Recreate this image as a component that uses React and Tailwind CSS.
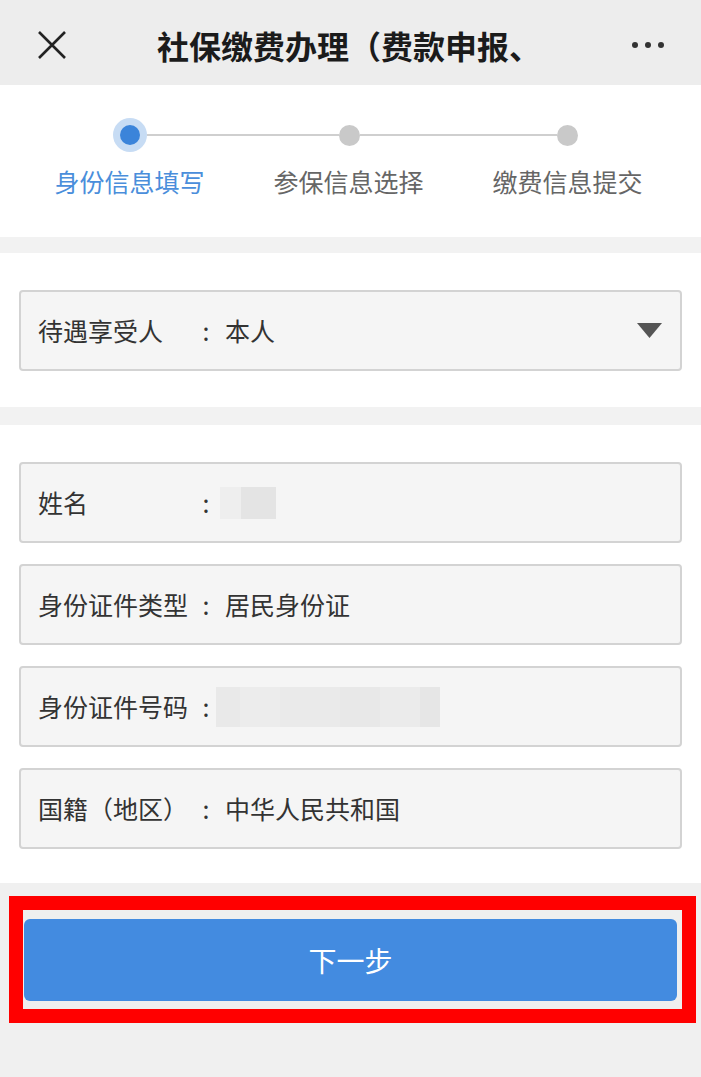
import React from "react";

const fields = [
  { label: "姓名", value: "name" },
  { label: "身份证件类型", value: "居民身份证" },
  { label: "身份证件号码", value: "id" },
  { label: "国籍（地区）", value: "中华人民共和国" },
];

const steps = ["身份信息填写", "参保信息选择", "缴费信息提交"];

const Masked = ({ kind }) => {
  if (kind === "name") {
    return (
      <div className="flex h-[32px] ml-[-5px]">
        <div className="w-[21px] bg-[#eeeeee]" />
        <div className="w-[35px] bg-[#e4e4e4]" />
      </div>
    );
  }
  return (
    <div className="flex h-[40px] ml-[-9px]">
      <div className="w-[24px] bg-[#e9e9e9]" />
      <div className="w-[40px] bg-[#ececec]" />
      <div className="w-[60px] bg-[#eaeaea]" />
      <div className="w-[40px] bg-[#e8e8e8]" />
      <div className="w-[40px] bg-[#ebebeb]" />
      <div className="w-[20px] bg-[#e6e6e6]" />
    </div>
  );
};

const Row = ({ label, children, right }) => (
  <div className="flex items-center h-[81px] border-2 border-[#d3d3d3] rounded-[4px] bg-[#f5f5f5] pl-[17px] pr-[18px] text-[25px] text-[#333]">
    <span className="w-[162px] whitespace-nowrap">{label}</span>
    <span className="w-[12px] text-center">:</span>
    <div className="ml-[13px] flex-1 flex items-center">{children}</div>
    {right}
  </div>
);

export default function App() {
  return (
    <div className="min-h-screen flex flex-col bg-[#f0f0f0] font-['Noto_Sans_CJK_SC','Noto_Sans',sans-serif]">
      {/* HEADER */}
      <div className="h-[85px] bg-[#ededed] flex items-center">
        <div className="w-[157px] pl-[37px] pt-[4px]">
          <svg width="30" height="30" viewBox="0 0 30 30">
            <path d="M2 2 L28 28 M28 2 L2 28" stroke="#222" strokeWidth="2.6" />
          </svg>
        </div>
        <div className="w-[405px] whitespace-nowrap pt-[4px]">
          <span className="text-[32px] font-bold text-[#1b1b1b]">
            社保缴费办理（费款申报、
          </span>
        </div>
        <div className="flex-1 flex justify-end pr-[37px] gap-[7px] pt-[4px]">
          <span className="w-[6px] h-[6px] rounded-full bg-[#333]" />
          <span className="w-[6px] h-[6px] rounded-full bg-[#333]" />
          <span className="w-[6px] h-[6px] rounded-full bg-[#333]" />
        </div>
      </div>

      {/* STEPPER */}
      <div className="h-[152px] bg-white pt-[33px]">
        <div className="flex items-center pl-[113px]">
          <div className="w-[34px] h-[34px] rounded-full bg-[#c7dcf4] flex items-center justify-center">
            <div className="w-[20px] h-[20px] rounded-full bg-[#3b84da]" />
          </div>
          <div className="w-[192px] h-[2px] bg-[#cfcfcf]" />
          <div className="w-[21px] h-[21px] rounded-full bg-[#c9c9c9]" />
          <div className="w-[197px] h-[2px] bg-[#cfcfcf]" />
          <div className="w-[21px] h-[21px] rounded-full bg-[#c9c9c9]" />
        </div>
        <div className="grid grid-cols-3 pl-[20px] pr-[24px] mt-[13px] text-[25px] leading-[32px]">
          {steps.map((s, i) => (
            <div
              key={s}
              className={`text-center ${i === 0 ? "text-[#4a8edb]" : "text-[#666]"}`}
            >
              {s}
            </div>
          ))}
        </div>
      </div>

      <div className="h-[16px] bg-[#f2f2f2]" />

      {/* SELECT */}
      <div className="bg-white px-[19px] pt-[37px] pb-[36px]">
        <Row
          label="待遇享受人"
          right={
            <svg width="25" height="15" viewBox="0 0 25 15">
              <path d="M0 0 H25 L12.5 15 Z" fill="#555" />
            </svg>
          }
        >
          本人
        </Row>
      </div>

      <div className="h-[18px] bg-[#f2f2f2]" />

      {/* FIELDS */}
      <div className="bg-white px-[19px] pt-[37px] pb-[34px] flex flex-col gap-[21px]">
        {fields.map((f) => (
          <Row key={f.label} label={f.label}>
            {f.value === "name" || f.value === "id" ? (
              <Masked kind={f.value} />
            ) : (
              f.value
            )}
          </Row>
        ))}
      </div>

      {/* ACTION */}
      <div className="flex-1 bg-[#f0f0f0] pt-[13px] pl-[9px] pr-[5px]">
        <div className="border-[14px] border-[#ff0000] bg-[#efefef] pt-[9px] pb-[8px] pl-[1px] pr-[5px]">
          <button className="w-full h-[82px] rounded-[6px] bg-[#438be0] text-white text-[28px]">
            下一步
          </button>
        </div>
      </div>
    </div>
  );
}
